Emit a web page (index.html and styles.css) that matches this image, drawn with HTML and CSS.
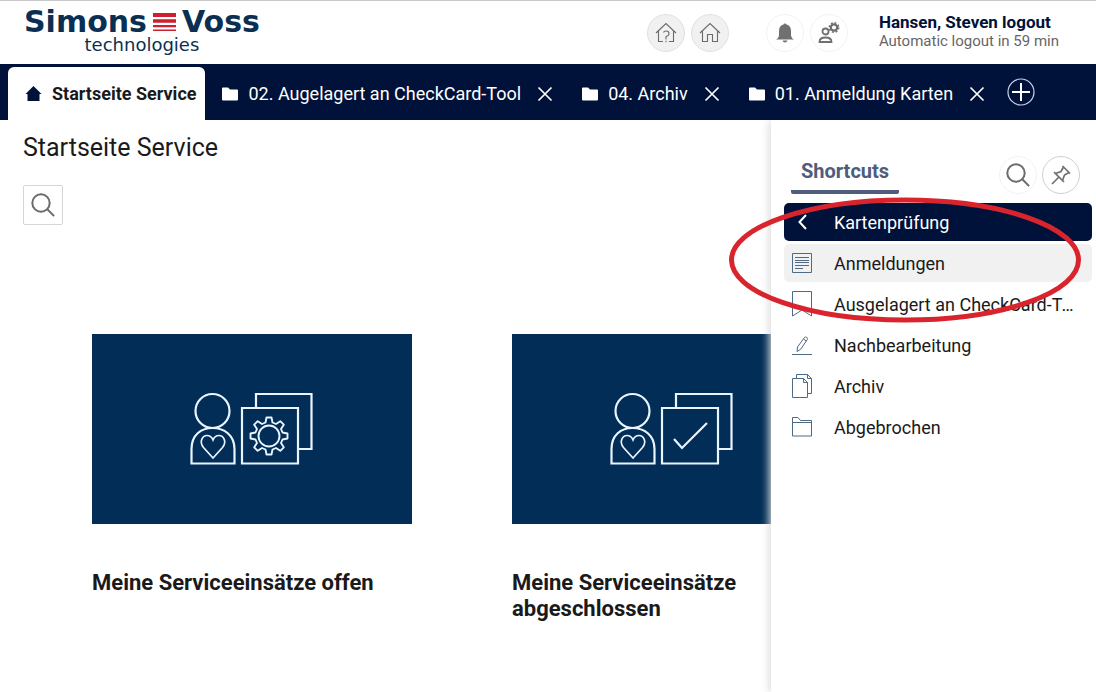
FILE: index.html
```html
<!DOCTYPE html>
<html lang="de">
<head>
<meta charset="utf-8">
<meta name="viewport" content="width=device-width, initial-scale=1">
<title>Startseite Service</title>
<link rel="stylesheet" href="styles.css">
</head>
<body>
<svg class="symbols" aria-hidden="true">
  <symbol id="folder" viewBox="0 0 16 14"><path d="M1 0.5h5l2 2h7q1 0 1 1v9q0 1-1 1H1q-1 0-1-1v-11q0-1 1-1z" fill="currentColor"/></symbol>
  <symbol id="close" viewBox="0 0 16 16"><path d="M1.500 1.500l13 13M14.500 1.500l-13 13" stroke="currentColor" stroke-width="1.700" fill="none"/></symbol>
  <symbol id="search" viewBox="0 0 24 24"><g fill="none" stroke="currentColor" stroke-width="2"><circle cx="10" cy="10" r="8.700"/><path d="M16.300 16.300l6.800 6.800"/></g></symbol>
  <symbol id="person" viewBox="0 0 46 74"><g fill="none" stroke="currentColor" stroke-width="2.200"><circle cx="22.500" cy="19" r="17"/><path d="M1.500 71.500V57C1.500 43 11 36 22.500 36S44.500 43 44.500 57V71.500Z"/><path stroke-width="1.700" d="M23 66L13.500 55.500C8.500 49 13 43.500 17 43.500c3 0 5 2 6 4.500c1-2.500 3-4.500 6-4.500c4 0 8.500 5.500 3.500 12z"/></g></symbol>
  <symbol id="sheets" viewBox="0 0 74 74"><path d="M16 16V2h55.500v55H58M2 16h56v55.500H2z" fill="none" stroke="currentColor" stroke-width="2.200"/></symbol>
</svg>

<header class="topbar">
  <div class="logo">
    <div class="logo-name">
      <span>Simons</span>
      <svg class="logo-bars" viewBox="0 0 23 18" aria-hidden="true"><path d="M0 0h23v4H0zM0 6.300h23v3.500H0zM0 12h23v2.300H0zM0 16.500h23v1.500H0z" fill="#cf1f2e"/></svg>
      <span>Voss</span>
    </div>
    <div class="logo-sub">technologies</div>
  </div>
  <div class="actions">
    <button class="round filled" aria-label="Hilfe">
      <svg width="22" height="22" viewBox="0 0 22 22" fill="none" stroke="#6b6b6b" stroke-width="1.100"><path d="M1 11L11 1.500L21 11M3.500 9v10.500h4.500M14 19.500h4.500V9"/><path d="M8.500 10.500Q9 9 11 9q3 0 3 2.500T11 14.500v3M11 18.800v1.400"/></svg>
    </button>
    <button class="round filled" aria-label="Startseite">
      <svg width="22" height="22" viewBox="0 0 22 22" fill="none" stroke="#6b6b6b" stroke-width="1.100"><path d="M1 11L11 1.500L21 11M3.500 9v10.500h5V12.500h5v7h5V9"/></svg>
    </button>
  </div>
  <div class="actions">
    <button class="round" aria-label="Benachrichtigungen">
      <svg width="20" height="20" viewBox="0 0 20 20" fill="#707070"><path d="M1 16.500q3-1.500 3-5V8q0-5.500 4.500-6.500q0-1 1.500-1t1.500 1Q16 2.500 16 8v3.500q0 3.500 3 5zM7.500 17.500h5q-.5 2-2.500 2t-2.500-2z"/></svg>
    </button>
    <button class="round" aria-label="Benutzereinstellungen">
      <svg width="22" height="22" viewBox="0 0 22 22" fill="none" stroke="#707070" stroke-width="1.800"><circle cx="7.500" cy="9.500" r="3"/><path d="M1.500 20q0-4.500 6-4.500t6 4.500z"/><circle cx="16" cy="5.500" r="3.200" stroke-width="2.200"/><circle cx="16" cy="5.500" r="4.700" stroke-width="1.600" stroke-dasharray="1.850 1.840"/></svg>
    </button>
  </div>
  <div class="user">
    <div class="user-name">Hansen, Steven <a href="#logout">logout</a></div>
    <div class="user-note">Automatic logout in 59 min</div>
  </div>
</header>

<nav class="tabs">
  <a class="tab active" href="#start">
    <svg width="17" height="17" viewBox="0 0 17 17" aria-hidden="true"><path d="M8.500 1L16.500 9H14.500V16H2.500V9H.5z" fill="#00123a"/></svg>
    <span>Startseite Service</span>
  </a>
  <div class="tab">
    <svg width="16" height="14"><use href="#folder"/></svg><a href="#t2">02. Augelagert an CheckCard-Tool</a>
    <button class="close" aria-label="Schließen"><svg width="16" height="16"><use href="#close"/></svg></button>
  </div>
  <div class="tab">
    <svg width="16" height="14"><use href="#folder"/></svg><a href="#t4">04. Archiv</a>
    <button class="close" aria-label="Schließen"><svg width="16" height="16"><use href="#close"/></svg></button>
  </div>
  <div class="tab">
    <svg width="16" height="14"><use href="#folder"/></svg><a href="#t1">01. Anmeldung Karten</a>
    <button class="close" aria-label="Schließen"><svg width="16" height="16"><use href="#close"/></svg></button>
  </div>
  <button class="add" aria-label="Neuer Tab"><svg width="28" height="28" viewBox="0 0 28 28" fill="none" stroke="#fff"><circle cx="14" cy="14" r="13" stroke="#c9d3ea" stroke-width="1.200"/><path d="M14 5v18M5 14h18" stroke-width="2"/></svg></button>
</nav>

<div class="workspace">
  <main class="page">
    <h1>Startseite Service</h1>
    <button class="find" aria-label="Suchen"><svg width="24" height="24"><use href="#search"/></svg></button>
    <div class="cards">
      <a class="card" href="#offen">
        <div class="card-art">
          <svg width="46" height="74"><use href="#person"/></svg>
          <svg width="74" height="74" viewBox="0 0 74 74"><use href="#sheets" width="74" height="74"/><g fill="none" stroke="currentColor" stroke-width="1.900" stroke-linejoin="round"><circle cx="29" cy="44" r="10.500"/><path d="M26.500 25.500h5l1 5l3.500 1.500l4.300-2.800l3.500 3.500l-2.800 4.300l1.500 3.500l5 1v5l-5 1l-1.500 3.500l2.800 4.300l-3.500 3.500l-4.300-2.800l-3.500 1.500l-1 5h-5l-1-5l-3.500-1.500l-4.300 2.800l-3.500-3.500l2.800-4.300l-1.500-3.500l-5-1v-5l5-1l1.500-3.500l-2.800-4.300l3.500-3.500l4.300 2.800l3.500-1.500z"/></g></svg>
        </div>
        <h2>Meine Serviceeinsätze offen</h2>
      </a>
      <a class="card" href="#abgeschlossen">
        <div class="card-art">
          <svg width="46" height="74"><use href="#person"/></svg>
          <svg width="74" height="74" viewBox="0 0 74 74"><use href="#sheets" width="74" height="74"/><path d="M14 47l8 9L47 31" fill="none" stroke="currentColor" stroke-width="2.200"/></svg>
        </div>
        <h2>Meine Serviceeinsätze abgeschlossen</h2>
      </a>
    </div>
  </main>

  <aside class="drawer">
    <div class="drawer-head">
      <h3>Shortcuts</h3>
      <div class="drawer-tools">
        <button class="round" aria-label="Suchen"><svg width="24" height="24"><use href="#search"/></svg></button>
        <button class="round ring" aria-label="Anheften"><svg width="20" height="20" viewBox="0 0 20 20" fill="none" stroke="#707070" stroke-width="1.700"><path d="M11.500 1L19 8.500M12.500 2L10 6.500L4.500 8.500L11.500 15.500L13.500 10L18 7.500M3 7l10 10M8 12L1 19"/></svg></button>
      </div>
    </div>
    <ul class="menu">
      <li><a class="item back" href="#back"><svg width="20" height="20" viewBox="0 0 20 20"><path d="M14 3L7.500 10L14 17" stroke-width="2"/></svg><span>Kartenprüfung</span></a></li>
      <li><a class="item current" href="#anmeldungen"><svg width="20" height="20" viewBox="0 0 20 20"><path d="M.5.5h19v19H.5zM3 4.500h14M3 7.500h14M3 9.500h14M3 12.500h14M3 15.500h8"/></svg><span>Anmeldungen</span></a></li>
      <li><a class="item" href="#ausgelagert"><svg width="20" height="26" viewBox="0 0 20 26"><path d="M.5.500h19V25L10 19L.5 25z"/></svg><span>Ausgelagert an CheckCard-Tool</span></a></li>
      <li><a class="item" href="#nachbearbeitung"><svg width="20" height="20" viewBox="0 0 20 20"><path d="M0 19.500h20M5.500 12L12.500 2.500q1-1 2.200-.2t.6 2.200L8.500 14.500L5 16.500zM11.500 4l2.700 2"/></svg><span>Nachbearbeitung</span></a></li>
      <li><a class="item" href="#archiv"><svg width="20" height="24" viewBox="0 0 20 24"><path d="M.5 4.500h11l4 4v15H.5zM11.500 4.500v4h4M4.500 4.500v-4h11l4 4v15h-4M15.500.5v4h4"/></svg><span>Archiv</span></a></li>
      <li><a class="item" href="#abgebrochen"><svg width="20" height="20" viewBox="0 0 20 20"><path d="M.5 19V.5h5.500l2.500 3h11V19zM.5 5.500h19"/></svg><span>Abgebrochen</span></a></li>
    </ul>
    <svg class="marker" width="354" height="126" viewBox="0 0 354 126" aria-hidden="true"><ellipse cx="177" cy="63" rx="173.500" ry="60" fill="none" stroke="#d9242d" stroke-width="5"/></svg>
  </aside>
</div>
</body>
</html>
```
FILE: styles.css
```css
* { box-sizing: border-box; }

body {
  margin: 0;
  min-height: 100vh;
  display: flex;
  flex-direction: column;
  overflow-x: hidden;
  background: #fff;
  color: #1a1a1a;
  font-family: Roboto, sans-serif;
  font-size: 18px;
}

a { color: inherit; text-decoration: none; }
button { padding: 0; border: 0; background: none; color: inherit; font: inherit; cursor: pointer; }
svg { flex: none; }
h1, h2, h3 { margin: 0; }
.symbols { position: absolute; width: 0; height: 0; }

.topbar {
  display: flex;
  align-items: center;
  height: 64px;
  border-top: 1px solid #c9c9c9;
  padding: 0 37px 0 24px;
}

.logo { margin-right: auto; padding-bottom: 4px; color: #0b2f52; font-family: "DejaVu Sans", sans-serif; }
.logo-name { display: flex; align-items: center; gap: 6px; font-size: 30px; font-weight: bold; line-height: 28px; }
.logo-bars { width: 23px; height: 18px; }
.logo-sub { font-size: 18px; line-height: 18px; text-align: center; }

.actions { display: flex; gap: 6px; margin-right: 37px; }
.actions + .actions { margin-right: 31px; }

.round {
  display: flex;
  align-items: center;
  justify-content: center;
  width: 38px;
  height: 38px;
  border: 1px solid #f3f3f3;
  border-radius: 50%;
  background: #fff;
  color: #6b6b6b;
}
.round.filled { border-color: #e0e0e0; background: #f1f1f1; }
.round.ring { border-color: #d0d0d0; }

.user-name { color: #00123a; font-size: 17px; font-weight: 700; line-height: 19px; }
.user-note { padding-bottom: 2px; color: #666; font-size: 15px; line-height: 18px; }

.tabs {
  display: flex;
  align-items: stretch;
  height: 56px;
  padding: 3px 8px 0;
  background: #00123a;
  color: #fff;
}
.tab { display: flex; align-items: center; gap: 10px; padding: 0 12px 0 17px; white-space: nowrap; }
.tab.active { padding-right: 9px; border-radius: 6px 6px 0 0; background: #fff; color: #1a1a1a; font-weight: 700; }
.close { display: flex; margin-left: 6px; }
.add { display: flex; align-items: center; margin-left: 10px; padding-bottom: 4px; }

.workspace { position: relative; flex: 1; overflow: hidden; }
.page { padding: 13px 23px 24px; }
.page h1 { font-size: 25px; font-weight: 400; line-height: 30px; }
.find {
  display: flex;
  align-items: center;
  justify-content: center;
  width: 40px;
  height: 40px;
  margin-top: 22px;
  border: 1px solid #d6d6d6;
  border-radius: 2px;
  color: #6b6b6b;
}

.cards { display: grid; grid-template-columns: repeat(auto-fill, 320px); gap: 48px 100px; margin: 109px 69px 0; }
.card-art {
  display: flex;
  align-items: center;
  justify-content: center;
  gap: 4px;
  height: 190px;
  background: #012d56;
  color: #eaf4ff;
}
.card h2 { margin-top: 46px; font-size: 22px; font-weight: 700; line-height: 26px; }

.drawer {
  position: absolute;
  top: 0;
  right: 0;
  bottom: 0;
  width: 325px;
  padding: 36px 4px 0 13px;
  background: #fff;
  box-shadow: -2px 0 8px #dcdcdc;
}
.drawer-head { display: flex; justify-content: space-between; align-items: flex-start; padding: 0 12px 0 7px; }
.drawer h3 {
  padding: 2px 10px 6px;
  border-bottom: 4px solid #505c7c;
  border-radius: 2px;
  color: #505c7c;
  font-size: 20px;
  font-weight: 700;
  line-height: 26px;
}
.drawer-tools { display: flex; gap: 5px; }

.menu { display: grid; grid-template-columns: minmax(0, 1fr); gap: 3px; margin: 9px 0 0; padding: 0; list-style: none; }
.item {
  display: flex;
  align-items: center;
  gap: 22px;
  height: 38px;
  padding: 0 12px 0 8px;
  border-radius: 5px;
}
.item svg { fill: none; stroke: #4f6a84; stroke-width: 1; }
.item span { overflow: hidden; text-overflow: ellipsis; white-space: nowrap; }
.item.back { background: #00123a; color: #fff; }
.item.back svg { stroke: #fff; }
.item.current { background: #f1f1f1; }

.marker { position: absolute; top: 77px; right: 14px; pointer-events: none; }
```
